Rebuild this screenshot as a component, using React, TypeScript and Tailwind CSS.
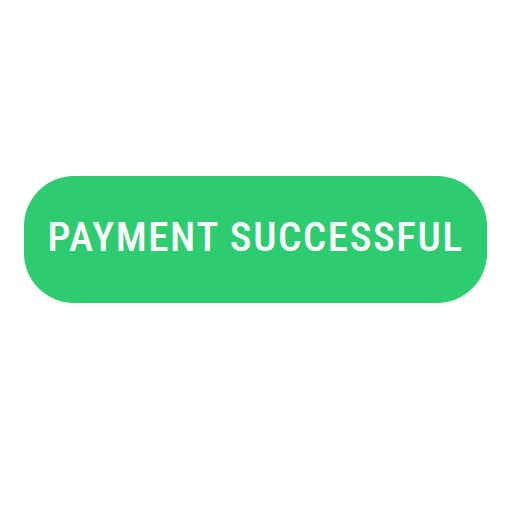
export default function App() {
  return (
    <div className="w-[512px] h-[512px] bg-white pt-[176px] pl-[24px]">
      <button className="w-[463px] h-[127px] rounded-[50px] bg-[#2ecc71] flex items-center justify-center">
        <span
          className="inline-block text-white text-[41px] leading-none font-medium tracking-[1.6px] mb-[5px] font-stretch-condensed"
          style={{ fontFamily: '"Roboto Condensed", "Roboto", sans-serif' }}
        >
          PAYMENT SUCCESSFUL
        </span>
      </button>
    </div>
  )
}
